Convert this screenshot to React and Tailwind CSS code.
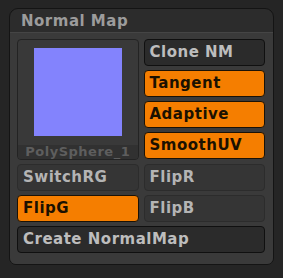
import React from "react";

const font = { fontFamily: '"DejaVu Sans", Verdana, sans-serif' };

function Btn({ label, variant = "dark" }) {
    const styles = {
        dark: "bg-[#2b2b2b] border-[#101010] text-[#bdbdbd]",
        flat: "bg-[#353535] border-[#2c2c2c] text-[#b4b4b4]",
        orange: "bg-[#f57e00] border-[#1a1206] text-[#1b1100]",
    };
    return (
        <div
            className={`h-[27px] flex items-center pl-[5px] rounded-[4px] border text-[15px] font-bold tracking-[0.5px] leading-none ${styles[variant]}`}
        >
            {label}
        </div>
    );
}

export default function App() {
    return (
        <div className="w-[283px] h-[278px] bg-[#252525] pt-[8px] pl-[9px]" style={font}>
            <div className="w-[265px] h-[257px] rounded-t-[9px] rounded-b-[7px] border border-[#141414] bg-[#2c2c2c] flex flex-col overflow-hidden">
                {/* Header */}
                <div className="h-[23px] flex items-center pl-[11px] pt-[2px] text-[#9c9c9c] text-[15px] font-bold tracking-[0.5px]">
                    Normal Map
                </div>

                {/* Body */}
                <div className="flex-1 bg-[#3a3a3a] border-t border-[#454545] pl-[7px] pr-[8px] pt-[6px] flex flex-col gap-[4px]">
                    <div className="grid grid-cols-2 gap-x-[5px]">
                        {/* Thumbnail */}
                        <div className="h-[121px] rounded-[4px] border border-[#232323] bg-[#393939] flex flex-col overflow-hidden">
                            <div className="flex-1 flex justify-center pt-[8px]">
                                <div className="w-[88px] h-[88px] bg-[#8383fd]" />
                            </div>
                            <div className="h-[14px] bg-[#313131] text-[#5e5e5e] text-[13px] font-bold text-center leading-[14px] tracking-[0.5px]">
                                PolySphere_1
                            </div>
                        </div>
                        <div className="flex flex-col gap-[4px]">
                            <Btn label="Clone NM" />
                            <Btn label="Tangent" variant="orange" />
                            <Btn label="Adaptive" variant="orange" />
                            <Btn label="SmoothUV" variant="orange" />
                        </div>
                    </div>
                    <div className="grid grid-cols-2 gap-x-[5px] gap-y-[4px]">
                        <Btn label="SwitchRG" variant="flat" />
                        <Btn label="FlipR" variant="flat" />
                        <Btn label="FlipG" variant="orange" />
                        <Btn label="FlipB" variant="flat" />
                    </div>
                    <Btn label="Create NormalMap" />
                </div>
            </div>
        </div>
    );
}
